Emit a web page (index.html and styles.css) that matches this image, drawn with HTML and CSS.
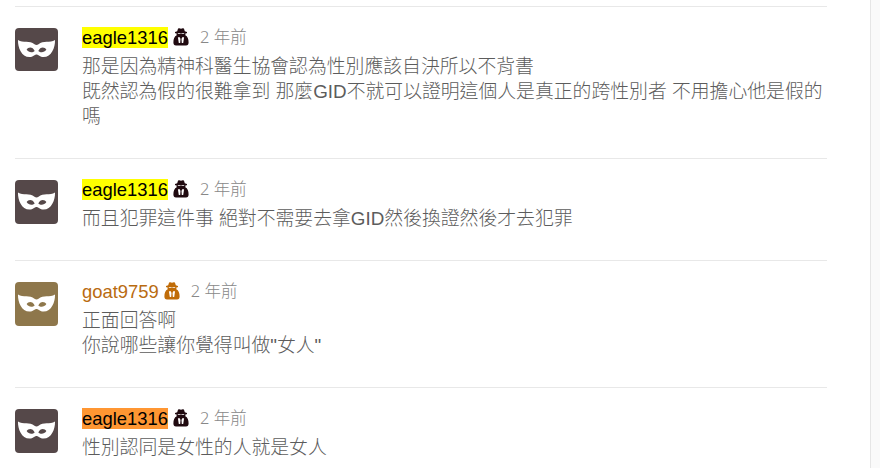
FILE: index.html
```html
<!DOCTYPE html>
<html lang="zh-Hant">

<head>
    <meta charset="utf-8">
    <meta name="viewport" content="width=device-width, initial-scale=1.0">
    <title>eagle1316</title>
    <link rel="stylesheet" href="styles.css">
</head>

<body>
    <!-- Shared shapes: avatar mask and anonymous user badge -->
    <svg class="symbols" width="0" height="0">
        <symbol id="mask" viewBox="0 0 43 43">
            <path fill-rule="evenodd" d="M3 12C8 15.3 14.8 12.2 19.5 16.2Q21.5 17.8 23.5 16.2C28.2 12.2 35 15.3 40 12C40.3 19.5 36.5 29.1 28.5 29.1C25 29.1 23.3 26.4 21.5 26.4C19.7 26.4 18 29.1 14.5 29.1C6.5 29.1 2.7 19.5 3 12ZM11.6 21.6C13.7 24.8 17.6 25 19.7 22.9C17.8 18.6 13.4 18.6 11.6 21.6ZM31.4 21.6C29.6 18.6 25.2 18.6 23.3 22.9C25.4 25 29.3 24.8 31.4 21.6Z" />
        </symbol>
        <symbol id="spy" viewBox="0 0 16 18">
            <path fill-rule="evenodd" d="M4.2 3.3L5 .8Q5.3 0 6.2 .3L8 .8L9.8 .3Q10.7 0 11 .8L11.8 3.3L14 3.9V5.2H12.6L12.3 7.2C14.6 8.2 15.6 11 15.6 14.6Q15.6 17.6 13 17.6H3Q.4 17.6 .4 14.6C.4 11 1.4 8.2 3.7 7.2L3.4 5.2H2V3.9ZM4.8 5.3V6H7.4V5.4H8.6V6H11.2V5.3ZM4.9 9.2L5.8 15H7.2L7.5 11L6.8 9.3ZM11.1 9.2L9.2 9.3L8.5 11L8.8 15H10.2Z" />
        </symbol>
    </svg>

    <div class="page">
        <div class="comments">
            <div class="comment">
                <svg class="avatar"><use href="#mask" /></svg>
                <div class="content">
                    <div class="meta">
                        <mark class="name">eagle1316</mark>
                        <svg class="badge"><use href="#spy" /></svg>
                        <span class="time">2 年前</span>
                    </div>
                    <div class="text">那是因為精神科醫生協會認為性別應該自決所以不背書<br>既然認為假的很難拿到 那麼GID不就可以證明這個人是真正的跨性別者 不用擔心他是假的嗎</div>
                </div>
            </div>

            <div class="comment">
                <svg class="avatar"><use href="#mask" /></svg>
                <div class="content">
                    <div class="meta">
                        <mark class="name">eagle1316</mark>
                        <svg class="badge"><use href="#spy" /></svg>
                        <span class="time">2 年前</span>
                    </div>
                    <div class="text">而且犯罪這件事 絕對不需要去拿GID然後換證然後才去犯罪</div>
                </div>
            </div>

            <div class="comment goat">
                <svg class="avatar"><use href="#mask" /></svg>
                <div class="content">
                    <div class="meta">
                        <span class="name">goat9759</span>
                        <svg class="badge"><use href="#spy" /></svg>
                        <span class="time">2 年前</span>
                    </div>
                    <div class="text">正面回答啊<br>你說哪些讓你覺得叫做"女人"</div>
                </div>
            </div>

            <div class="comment">
                <svg class="avatar"><use href="#mask" /></svg>
                <div class="content">
                    <div class="meta">
                        <mark class="name current">eagle1316</mark>
                        <svg class="badge"><use href="#spy" /></svg>
                        <span class="time">2 年前</span>
                    </div>
                    <div class="text">性別認同是女性的人就是女人</div>
                </div>
            </div>
        </div>
    </div>
</body>

</html>
```
FILE: styles.css
```css
body {
    margin: 0;
    height: 468px;
    overflow: hidden;
    background: #fafafa;
    font-family: "Liberation Sans", "Noto Sans CJK TC", sans-serif;
}

.symbols {
    position: absolute;
}

.page {
    box-sizing: border-box;
    width: 871px;
    height: 468px;
    padding: 6px 43px 0 15px;
    overflow: hidden;
    border-right: 1px solid #e6e6e6;
    background: #fff;
}

.comment {
    display: flex;
    align-items: flex-start;
    gap: 24px;
    padding: 21px 0 29px;
    border-top: 1px solid #e8e8e8;
}

.avatar {
    flex: none;
    width: 43px;
    height: 44px;
    border-radius: 4px;
    background: #554849;
    fill: #fff;
}

.comment:first-child .avatar {
    height: 43px;
}

.content {
    flex: 1;
    min-width: 0;
}

.meta {
    display: flex;
    align-items: center;
    height: 18px;
    margin-bottom: 8px;
}

.name {
    height: 21px;
    font-size: 18.4px;
    line-height: 21px;
    color: #000;
    background: #ff0;
}

.name.current {
    background: #ff9632;
}

.badge {
    width: 16px;
    height: 18px;
    margin: 0 11px 0 5px;
    fill: #200a10;
}

.time {
    font-family: "Noto Sans", "Noto Sans CJK TC", sans-serif;
    font-size: 16.5px;
    font-weight: 300;
    line-height: 20px;
    color: #888;
}

.text {
    font-size: 18.83px;
    font-weight: 300;
    line-height: 25px;
    color: #5c5c5c;
}

.goat .avatar {
    background: #8e774b;
}

.goat .name {
    color: #b96b10;
    background: none;
}

.goat .badge {
    fill: #c06c08;
}
```
